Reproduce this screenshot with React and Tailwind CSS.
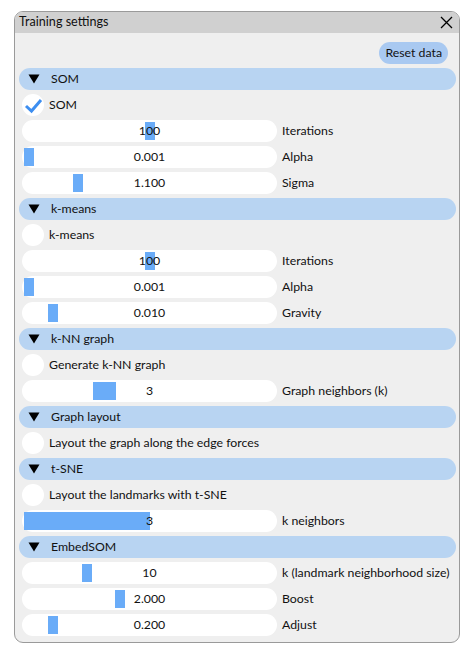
import React from "react";

const Triangle = () => (
  <svg width="12" height="10" viewBox="0 0 12 10" className="shrink-0">
    <polygon points="0.5,0.5 11.5,0.5 6,9.5" fill="#000" />
  </svg>
);

const Header = ({ title }) => (
  <div className="flex items-center h-[22px] rounded-full bg-[#b8d4f2] pl-[9px] gap-[11px]">
    <Triangle />
    <span>{title}</span>
  </div>
);

const Check = ({ label, checked }) => (
  <div className="flex items-center h-[22px] pl-[3px] gap-[5px]">
    <div className="w-[22px] h-[22px] rounded-full bg-white flex items-center justify-center shrink-0">
      {checked && (
        <svg width="20" height="20" viewBox="0 0 20 20">
          <polyline points="3,11 8.5,16 18,5" fill="none" stroke="#3d8ef0" strokeWidth="3" />
        </svg>
      )}
    </div>
    <span>{label}</span>
  </div>
);

const Slider = ({ value, label, left, width = 10 }) => (
  <div className="flex items-center h-[22px] pl-[3px] gap-[5px]">
    <div className="relative w-[255px] h-[22px] rounded-full bg-white shrink-0 flex items-center justify-center">
      <div
        className="absolute top-[2px] h-[18px] bg-[#6aacf8]"
        style={{ left: left - 22, width }}
      />
      <span className="relative">{value}</span>
    </div>
    <span className="whitespace-nowrap">{label}</span>
  </div>
);

export default function App() {
  return (
    <div className="w-[475px] h-[658px] bg-white pt-[11px] pl-[14px] font-['Lato',sans-serif] text-[12.3px] text-[#111]">
      <div className="w-[446px] h-[632px] rounded-[9px] border border-[#9a9a9a] bg-[#efefef] overflow-hidden flex flex-col">
        <div className="h-[21px] bg-[#d0d0d0] flex items-center justify-between pl-[4px] pr-[6px] text-[12.6px]">
          <span>Training settings</span>
          <svg width="13" height="13" viewBox="0 0 13 13">
            <path d="M1 1 L12 12 M12 1 L1 12" stroke="#000" strokeWidth="1.3" />
          </svg>
        </div>
        <div className="flex flex-col gap-[4px] pt-[9px] pl-[4px] pr-[3px]">
          <div className="flex justify-end pr-[8px]">
            <div className="h-[22px] px-[6px] rounded-full bg-[#a9c9f1] flex items-center">Reset data</div>
          </div>
          <Header title="SOM" />
          <Check label="SOM" checked />
          <Slider value="100" label="Iterations" left={145} />
          <Slider value="0.001" label="Alpha" left={24} />
          <Slider value="1.100" label="Sigma" left={73} />
          <Header title="k-means" />
          <Check label="k-means" />
          <Slider value="100" label="Iterations" left={145} />
          <Slider value="0.001" label="Alpha" left={24} />
          <Slider value="0.010" label="Gravity" left={48} />
          <Header title="k-NN graph" />
          <Check label="Generate k-NN graph" />
          <Slider value="3" label="Graph neighbors (k)" left={93} width={23} />
          <Header title="Graph layout" />
          <Check label="Layout the graph along the edge forces" />
          <Header title="t-SNE" />
          <Check label="Layout the landmarks with t-SNE" />
          <Slider value="3" label="k neighbors" left={24} width={126} />
          <Header title="EmbedSOM" />
          <Slider value="10" label="k (landmark neighborhood size)" left={82} />
          <Slider value="2.000" label="Boost" left={115} />
          <Slider value="0.200" label="Adjust" left={48} />
        </div>
      </div>
    </div>
  );
}
